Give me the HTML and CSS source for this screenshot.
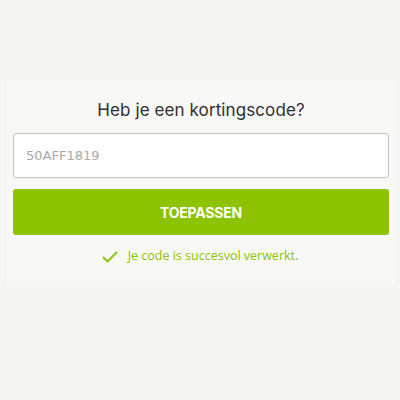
FILE: index.html
```html
<!DOCTYPE html>
<html>
<head>
<meta charset="utf-8">
<link rel="stylesheet" href="styles.css">
</head>
<body>
<div class="page">
  <div class="panel">
    <h2 class="title">Heb je een kortingscode?</h2>
    <div class="field">50AFF1819</div>
    <button class="btn">TOEPASSEN</button>
    <div class="msg">
      <svg class="check" width="16" height="12" viewBox="0 0 16 12"><path d="M1.5 6.5 L5.5 10.5 L14.5 1.5" fill="none" stroke="#8dc300" stroke-width="1.8" stroke-linecap="round" stroke-linejoin="round"/></svg>
      <span>Je code is succesvol verwerkt.</span>
    </div>
  </div>
</div>
</body>
</html>
```
FILE: styles.css
```css
html, body { margin: 0; padding: 0; }
body { background: #f5f5f4; width: 400px; height: 400px; overflow: hidden; }
.page { padding-top: 80px; padding-left: 7px; padding-right: 5px; }
.panel {
  background: #f8f8f7;
  height: 206px;
  padding: 20px 6px 0 6px;
  box-sizing: border-box;
  display: flex;
  flex-direction: column;
  align-items: stretch;
}
.title {
  margin: 0;
  height: 33px;
  font-family: "Inter", "Open Sans", sans-serif;
  font-weight: 400;
  font-size: 17px;
  color: #2f2f2f;
  text-align: center;
  letter-spacing: 0.1px;
}
.field {
  height: 45px;
  box-sizing: border-box;
  border: 1px solid #c2c2c2;
  border-radius: 3px;
  background: #fff;
  display: flex;
  align-items: center;
  padding-left: 12px;
  font-family: "DejaVu Sans", sans-serif;
  font-size: 13px;
  color: #a8a8a8;
}
.btn {
  margin-top: 11px;
  height: 46px;
  border: none;
  border-radius: 3px;
  background: #8dc300;
  color: #fff;
  font-family: "Inter", "Open Sans", sans-serif;
  font-weight: 700;
  font-size: 14px;
  letter-spacing: -0.2px;
  padding: 0;
}
.msg {
  margin-top: 12px;
  display: flex;
  justify-content: center;
  align-items: center;
  gap: 10px;
  font-family: "Open Sans", sans-serif;
  font-size: 12.5px;
  color: #8dc300;
  padding-right: 2px;
}
.check { display: block; margin-top: 2px; }
```
